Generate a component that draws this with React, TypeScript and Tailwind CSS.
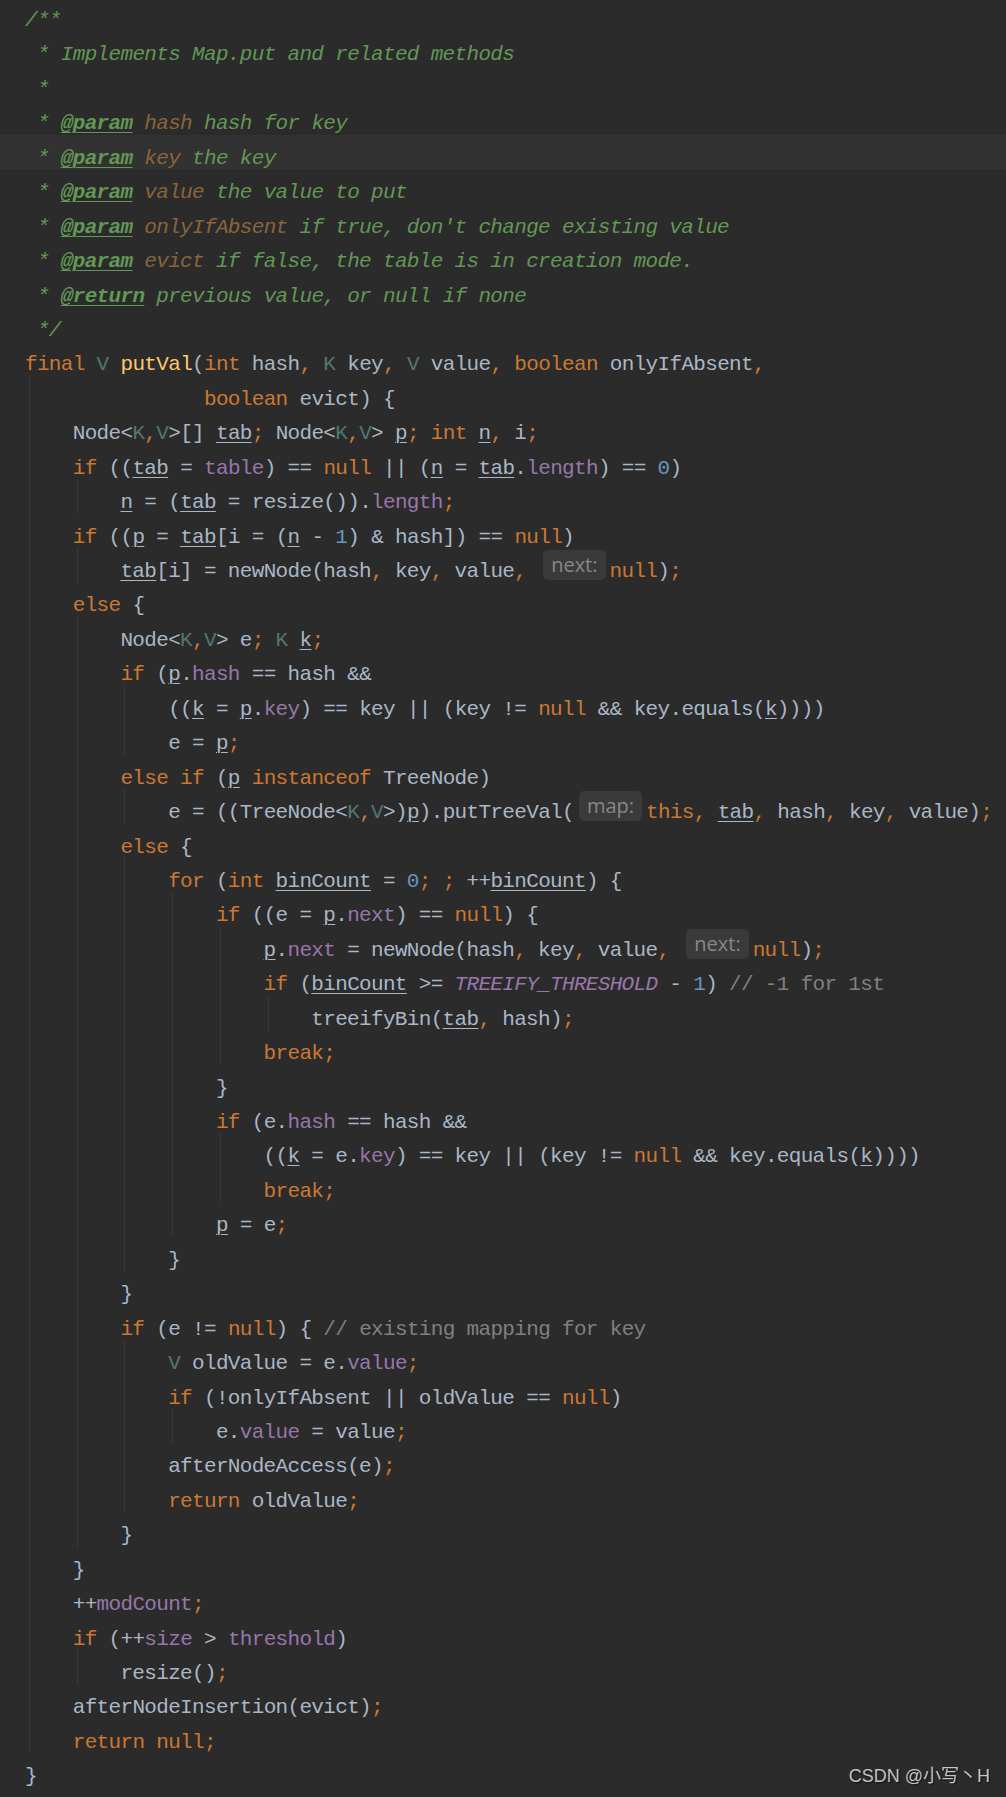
type Tok = { c: string; s: string };

const KEYWORDS = new Set(['final', 'int', 'boolean', 'if', 'else', 'null', 'for', 'break', 'instanceof', 'this', 'return']);
const TYPE_PARAMS = new Set(['K', 'V']);
const FIELDS = new Set(['table', 'modCount', 'size', 'threshold']);
const REASSIGNED = new Set(['tab', 'n', 'p', 'k', 'binCount']);

const colors: Record<string, string> = {
  t: 'text-[#a9b7c6]',
  kw: 'text-[#cc7832]',
  p: 'text-[#cc7832]',
  tp: 'text-[#507874]',
  fn: 'text-[#ffc66d]',
  fld: 'text-[#9876aa]',
  num: 'text-[#6897bb]',
  cst: 'text-[#9876aa] italic',
  cm: 'text-[#808080]',
  ul: 'text-[#a9b7c6] underline decoration-1 underline-offset-[3px]',
  dc: 'text-[#629755] italic',
  dt: 'text-[#629755] italic font-bold underline decoration-1 underline-offset-[3px]',
  dp: 'text-[#8a653b] italic',
};

const tokenize = (src: string): Tok[] => {
  const parts = src.match(/\/\/.*$|\{\{\w+:\}\}|[A-Za-z_]\w*|\d+|[,;]|\s+|./g) ?? [];
  return parts.map((s, i) => {
    if (s.startsWith('//')) return { c: 'cm', s };
    if (s.startsWith('{{')) return { c: 'hint', s: s.slice(2, -2) };
    if (/^\d/.test(s)) return { c: 'num', s };
    if (s === ',' || s === ';') return { c: 'p', s };
    if (/^[A-Za-z_]/.test(s)) {
      if (KEYWORDS.has(s)) return { c: 'kw', s };
      if (TYPE_PARAMS.has(s)) return { c: 'tp', s };
      if (s === 'putVal') return { c: 'fn', s };
      if (s === 'TREEIFY_THRESHOLD') return { c: 'cst', s };
      if (FIELDS.has(s) || (parts[i - 1] === '.' && parts[i + 1] !== '(')) return { c: 'fld', s };
      if (REASSIGNED.has(s)) return { c: 'ul', s };
    }
    return { c: 't', s };
  });
};

const docParam = (name: string, rest: string): Tok[] => [
  { c: 'dc', s: ' * ' },
  { c: 'dt', s: '@param' },
  { c: 'dc', s: ' ' },
  { c: 'dp', s: name },
  { c: 'dc', s: ' ' + rest },
];

const docLines: Tok[][] = [
  [{ c: 'dc', s: '/**' }],
  [{ c: 'dc', s: ' * Implements Map.put and related methods' }],
  [{ c: 'dc', s: ' *' }],
  docParam('hash', 'hash for key'),
  docParam('key', 'the key'),
  docParam('value', 'the value to put'),
  docParam('onlyIfAbsent', "if true, don't change existing value"),
  docParam('evict', 'if false, the table is in creation mode.'),
  [
    { c: 'dc', s: ' * ' },
    { c: 'dt', s: '@return' },
    { c: 'dc', s: ' previous value, or null if none' },
  ],
  [{ c: 'dc', s: ' */' }],
];

const code = [
  'final V putVal(int hash, K key, V value, boolean onlyIfAbsent,',
  '               boolean evict) {',
  '    Node<K,V>[] tab; Node<K,V> p; int n, i;',
  '    if ((tab = table) == null || (n = tab.length) == 0)',
  '        n = (tab = resize()).length;',
  '    if ((p = tab[i = (n - 1) & hash]) == null)',
  '        tab[i] = newNode(hash, key, value, {{next:}}null);',
  '    else {',
  '        Node<K,V> e; K k;',
  '        if (p.hash == hash &&',
  '            ((k = p.key) == key || (key != null && key.equals(k))))',
  '            e = p;',
  '        else if (p instanceof TreeNode)',
  '            e = ((TreeNode<K,V>)p).putTreeVal({{map:}}this, tab, hash, key, value);',
  '        else {',
  '            for (int binCount = 0; ; ++binCount) {',
  '                if ((e = p.next) == null) {',
  '                    p.next = newNode(hash, key, value, {{next:}}null);',
  '                    if (binCount >= TREEIFY_THRESHOLD - 1) // -1 for 1st',
  '                        treeifyBin(tab, hash);',
  '                    break;',
  '                }',
  '                if (e.hash == hash &&',
  '                    ((k = e.key) == key || (key != null && key.equals(k))))',
  '                    break;',
  '                p = e;',
  '            }',
  '        }',
  '        if (e != null) { // existing mapping for key',
  '            V oldValue = e.value;',
  '            if (!onlyIfAbsent || oldValue == null)',
  '                e.value = value;',
  '            afterNodeAccess(e);',
  '            return oldValue;',
  '        }',
  '    }',
  '    ++modCount;',
  '    if (++size > threshold)',
  '        resize();',
  '    afterNodeInsertion(evict);',
  '    return null;',
  '}',
];

type Line = { guides: number; toks: Tok[] };

const lines: Line[] = [
  ...docLines.map((toks) => ({ guides: 0, toks })),
  ...code.map((src, idx) => {
    const indent = src.length - src.trimStart().length;
    // the wrapped parameter line only sits under the method body guide
    const guides = idx === 1 ? 1 : Math.floor(indent / 4);
    const rest = ' '.repeat(indent - guides * 4) + src.trimStart();
    return { guides, toks: tokenize(rest) };
  }),
];

// negative block margins keep the tall hint box from pushing the line down
const Hint = ({ label }: { label: string }) => (
  <span className="-my-[5px] ml-[5px] mr-[4px] inline-block h-[30px] rounded-[5px] bg-[#3a3a3a] px-[8px] align-[5px] font-['Open_Sans',sans-serif] text-[20px] not-italic leading-[30px] tracking-normal text-[#878787]">
    {label}
  </span>
);

export default function App() {
  return (
    <div className="relative min-h-[1797px] w-full overflow-hidden bg-[#2b2b2b] font-['Liberation_Mono',monospace] text-[21px] tracking-[-0.67px] text-[#a9b7c6]">
      <div className="-mt-[3px]">
        {lines.map((line, i) => (
          <div key={i} className={`flex h-[34.45px] pl-[25px] ${i === 4 ? 'bg-[#323232]' : ''}`}>
            {Array.from({ length: line.guides }).map((_, g) => (
              <div key={g} className="w-[47.72px] shrink-0 pl-[4px]">
                <div className="h-full w-px bg-[#393939]" />
              </div>
            ))}
            <div className="whitespace-pre pt-[7px] leading-[34.45px]">
              {line.toks.map((tok, j) =>
                tok.c === 'hint' ? (
                  <Hint key={j} label={tok.s} />
                ) : (
                  <span key={j} className={colors[tok.c]}>
                    {tok.s}
                  </span>
                ),
              )}
            </div>
          </div>
        ))}
      </div>
      <div className="absolute bottom-[7px] right-[16px] font-['Liberation_Sans','Noto_Sans_CJK_SC',sans-serif] text-[18px] tracking-normal text-[#c4c4c4] [text-shadow:1px_1px_1px_#111]">
        CSDN @小写丶H
      </div>
    </div>
  );
}
